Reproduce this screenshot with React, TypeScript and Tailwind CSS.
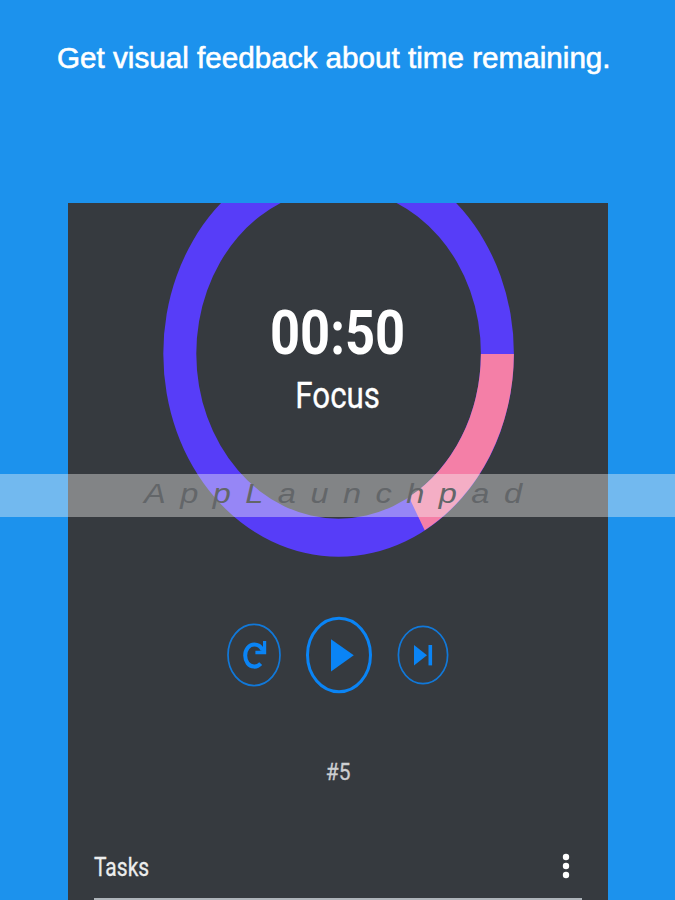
const BLUE = "#0a84f5";

// Ring that shows how much of the session is left
function ProgressRing() {
    return (
        <svg viewBox="0 0 352 408" className="absolute top-[-54px] left-[94px] h-[408px] w-[352px]">
            <path
                d="M351.6 204.7 A175.3 203 0 1 1 1 204.7 A175.3 203 0 1 1 351.6 204.7 Z M318.6 204.7 A142.3 165 0 1 0 34 204.7 A142.3 165 0 1 0 318.6 204.7 Z"
                fillRule="evenodd"
                transform="translate(.3 0)"
                fill="#573df8"
            />
            <path
                d="M351.9 205 A175.3 203 0 0 1 262.7 381.2 L246.9 348.1 A142.3 165 0 0 0 318.9 205 Z"
                fill="#f47fa7"
            />
        </svg>
    );
}

function RestartButton() {
    return (
        <button aria-label="Restart">
            <svg viewBox="0 0 56 64" className="h-16 w-14" fill="none" stroke={BLUE}>
                <ellipse cx="28" cy="32" rx="26" ry="30.6" strokeWidth="1.7" opacity=".85" />
                <path d="M34.7 40.6 C32.6 42.9 30.4 43.8 27.9 43.6 C22.7 43.2 19.2 38.6 19.2 32.6 C19.2 26.2 23 21.6 28.3 21.6 C32 21.6 34.6 23.3 36.6 27" strokeWidth="4" />
                <path d="M40.2 18 V31.2 H29.4 V27.8 H35.2 L37 24.8 V18 Z" fill={BLUE} stroke="none" />
            </svg>
        </button>
    );
}

function PlayButton() {
    return (
        <button aria-label="Play">
            <svg viewBox="0 0 70 80" className="h-20 w-[70px]" fill="none" stroke={BLUE}>
                <ellipse cx="35" cy="40" rx="31.5" ry="36.7" strokeWidth="3" />
                <path d="M27 24.2 L49.8 40.3 L27 56.4 Z" fill={BLUE} stroke="none" />
            </svg>
        </button>
    );
}

function SkipButton() {
    return (
        <button aria-label="Skip">
            <svg viewBox="0 0 54 62" className="h-[62px] w-[54px]" fill="none" stroke={BLUE}>
                <ellipse cx="27" cy="31" rx="24.6" ry="28.7" strokeWidth="1.7" opacity=".85" />
                <path d="M18 21 L31 31.2 L18 41.4 Z" fill={BLUE} stroke="none" />
                <path d="M34.3 21 V41.4" strokeWidth="3.6" />
            </svg>
        </button>
    );
}

export default function App() {
    return (
        <div className="relative flex h-[900px] w-[675px] flex-col items-center overflow-hidden bg-[#1c92ed]">
            <h1 className="flex h-[203px] w-full pt-10 pl-[57px] font-['Liberation_Sans',Arial,sans-serif] text-[30px] leading-9 whitespace-nowrap text-white">
                <span className="inline-block h-9 origin-left scale-x-[0.988] [-webkit-text-stroke:0.6px_white]">
                    Get visual feedback about time remaining.
                </span>
            </h1>

            <main className="relative h-[697px] w-[540px] overflow-hidden bg-[#363a3f] font-[Roboto,sans-serif] text-white">
                <ProgressRing />
                <div className="flex h-[410px] flex-col items-center pt-[95px] pl-px">
                    <div className="scale-x-[0.86] text-[61px] leading-[70px] font-bold">00:50</div>
                    <div className="mt-[7px] scale-x-[0.87] text-[36px] leading-[42px] [-webkit-text-stroke:0.3px_white]">Focus</div>
                </div>

                <div className="flex h-[84px] items-center justify-center gap-[22px]">
                    <RestartButton />
                    <PlayButton />
                    <SkipButton />
                </div>

                <div className="mt-[61px] flex h-7 justify-center pl-0.5 text-[24px] leading-7 text-[#cdcfd1]">
                    <span className="inline-block scale-x-[0.87] [-webkit-text-stroke:0.3px_#cdcfd1]">#5</span>
                </div>

                <div className="mx-[26px] mt-[58px] flex h-[56px] items-start justify-between border-b-2 border-[#aeb4ba] pt-2.5">
                    <span className="origin-left scale-x-[0.84] text-[25px] leading-7 text-[#eceded] [-webkit-text-stroke:0.3px_#eceded]">
                        Tasks
                    </span>
                    <svg viewBox="0 0 8 28" className="-mt-0.5 mr-3 h-7 w-2" fill="white">
                        <circle cx="4" cy="5" r="3.2" />
                        <circle cx="4" cy="14" r="3.2" />
                        <circle cx="4" cy="23" r="3.2" />
                    </svg>
                </div>
            </main>

            <div className="absolute top-[474px] left-0 flex h-[43px] w-full items-center bg-[#f6f6f2]/40 pb-[3px] pl-[144px] font-['Liberation_Sans',Arial,sans-serif] text-[27px] leading-none text-[#636669] italic">
                <span className="origin-left scale-x-[1.205] tracking-[12px] whitespace-nowrap">AppLaunchpad</span>
            </div>
        </div>
    );
}
